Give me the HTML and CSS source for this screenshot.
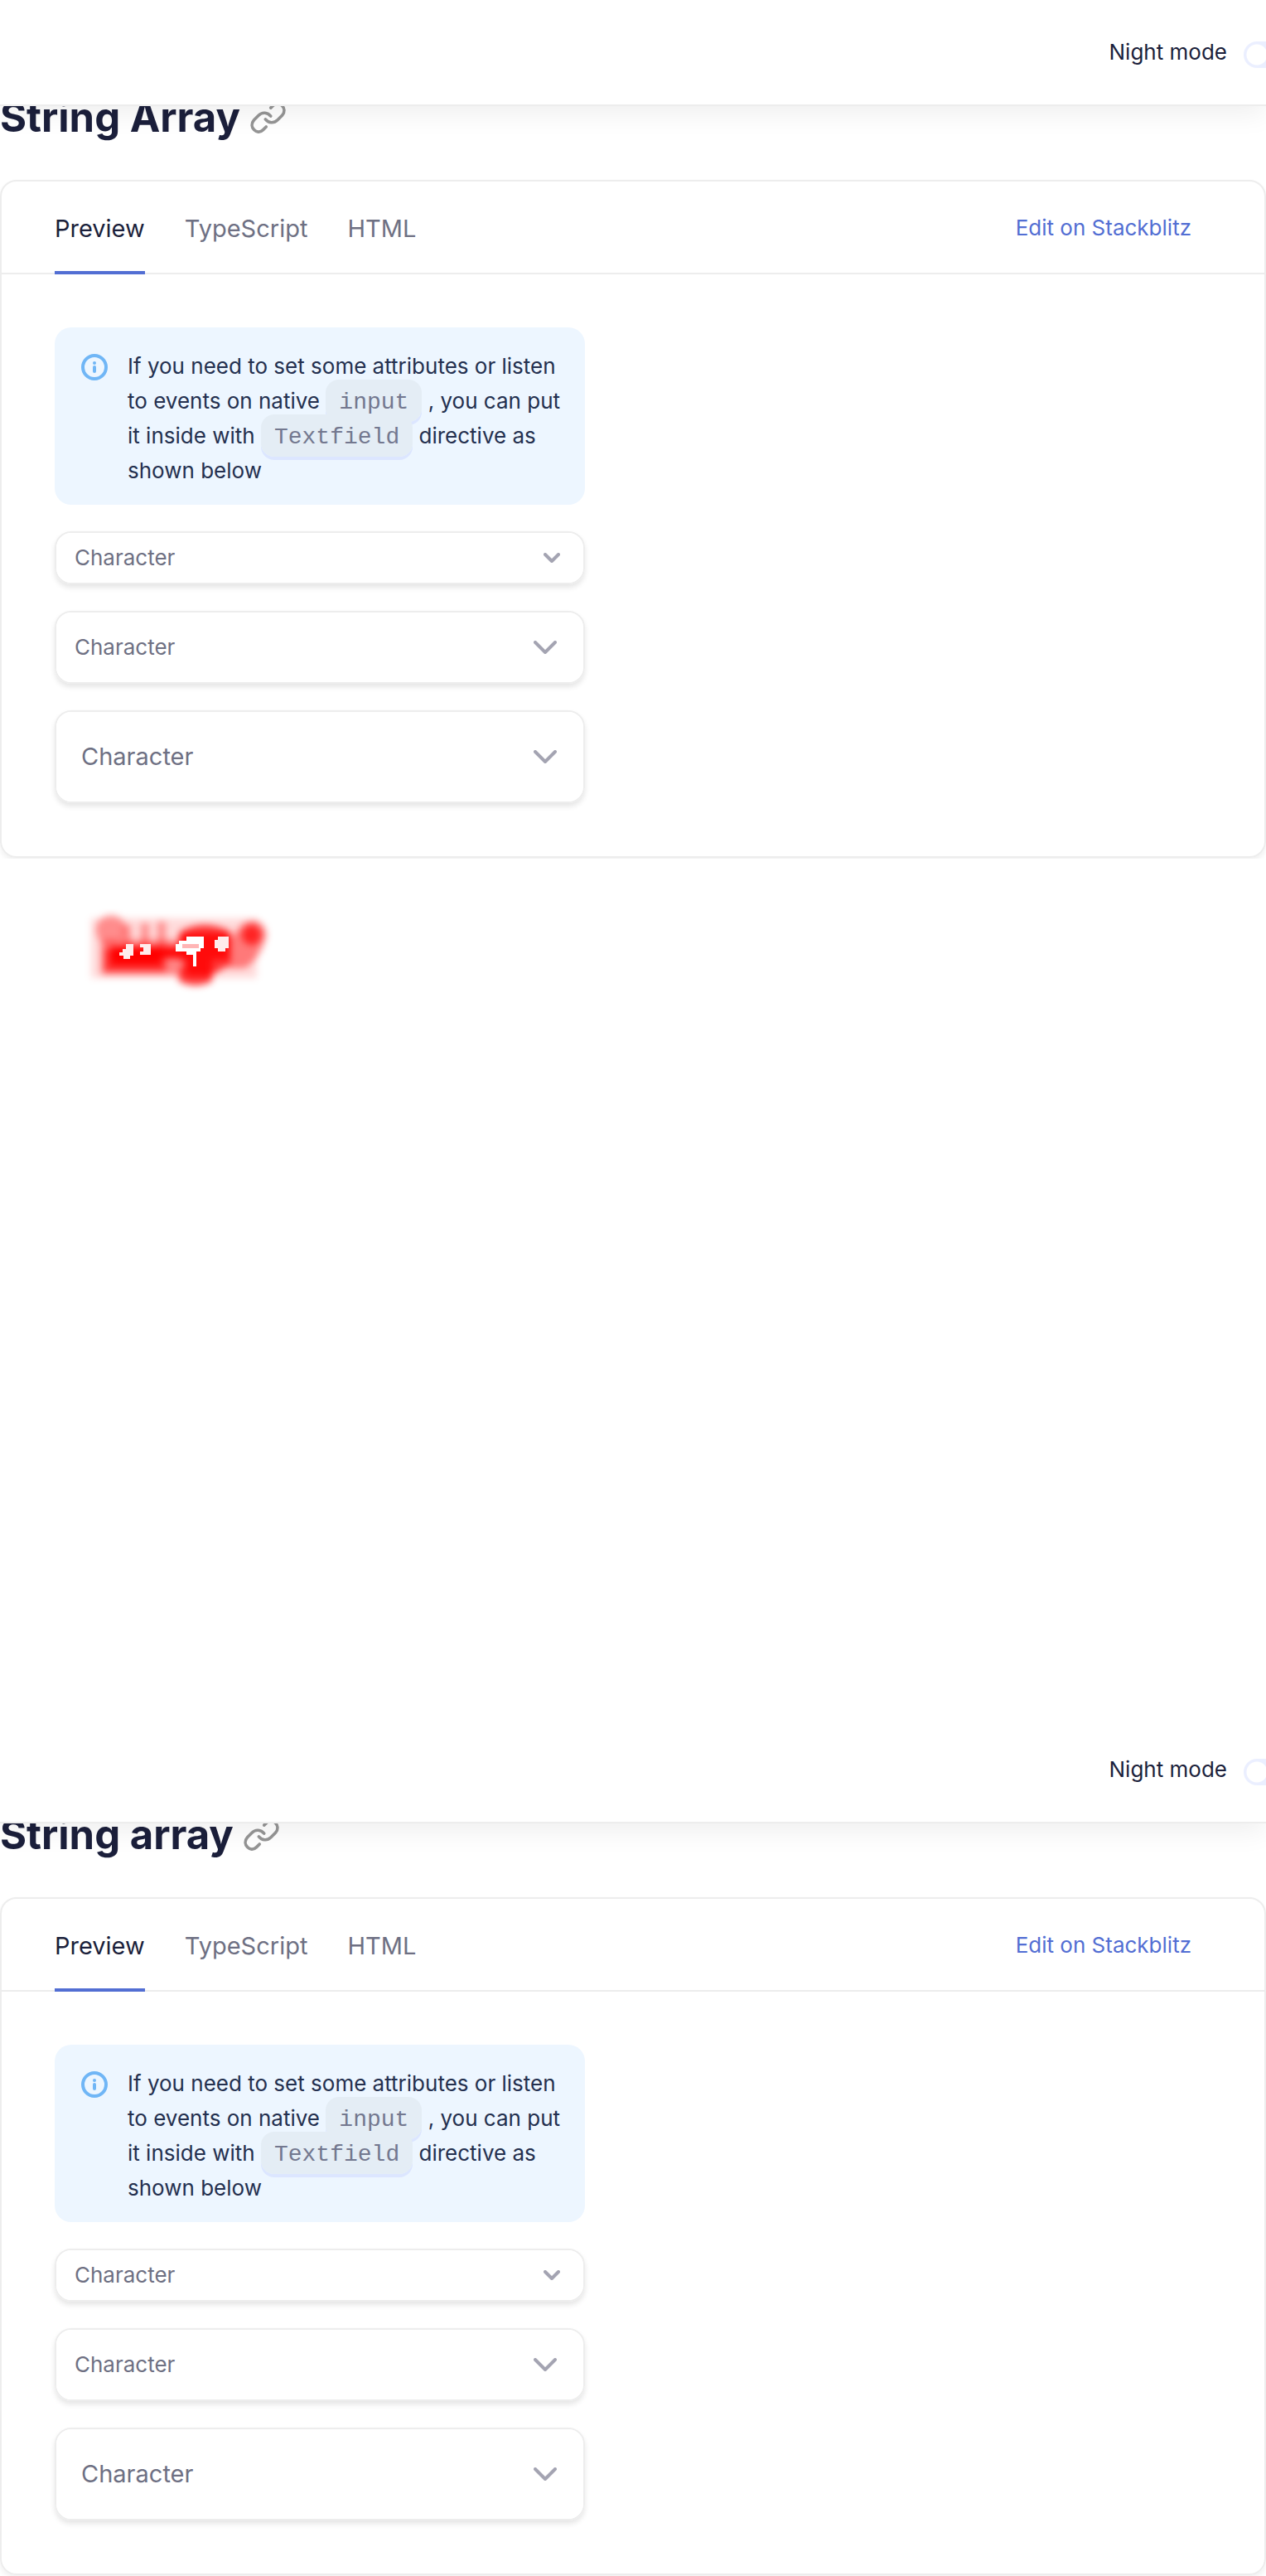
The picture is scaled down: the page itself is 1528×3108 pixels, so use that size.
FILE: index.html
```html
<!DOCTYPE html>
<html lang="en">
<head>
<meta charset="utf-8">
<meta name="viewport" content="width=device-width, initial-scale=1">
<title>String Array</title>
<link rel="stylesheet" href="styles.css">
</head>
<body>
<svg class="sprite" aria-hidden="true">
  <symbol id="link" viewBox="0 0 48 48">
    <g fill="none" stroke="currentColor" stroke-width="4" stroke-linecap="round" stroke-linejoin="round">
      <path d="M20 26c4 5 11 6 16 1l6-6c8-9-4-21-12-13l-3 3"/>
      <path d="M27 22c-4-5-11-6-16-1l-6 6c-8 9 4 21 12 13l4-4"/>
    </g>
  </symbol>
  <symbol id="info" viewBox="0 0 32 32">
    <circle cx="16" cy="16" r="14" fill="none" stroke="currentColor" stroke-width="4"/>
    <circle cx="16" cy="11" r="2" fill="currentColor"/>
    <path d="M16 16v5" stroke="currentColor" stroke-width="4" stroke-linecap="round"/>
  </symbol>
  <symbol id="chevron" viewBox="0 0 28 16">
    <path d="M2 2l12 12L26 2" fill="none" stroke="currentColor" stroke-width="4" stroke-linecap="round" stroke-linejoin="round"/>
  </symbol>
  <symbol id="chevron-small" viewBox="0 0 20 12">
    <path d="M2 2l8 8 8-8" fill="none" stroke="currentColor" stroke-width="4" stroke-linecap="round" stroke-linejoin="round"/>
  </symbol>
</svg>

<section class="shot">
  <header class="topbar">
    <label for="night-1">Night mode</label>
    <input class="toggle" type="checkbox" id="night-1">
  </header>
  <h2 class="title">String Array <a href="#string-array" aria-label="Link"><svg class="title-icon"><use href="#link"/></svg></a></h2>
  <article class="card">
    <nav class="tabs">
      <button class="tab active" type="button">Preview</button>
      <button class="tab" type="button">TypeScript</button>
      <button class="tab" type="button">HTML</button>
      <a class="edit" href="#edit">Edit on Stackblitz</a>
    </nav>
    <div class="demo">
      <div class="note">
        <svg class="note-icon"><use href="#info"/></svg>
        <p>If you need to set some attributes or listen to events on native <code>input</code> , you can put it inside with <code>Textfield</code> directive as shown below</p>
      </div>
      <div class="field small">
        <select aria-label="Character"><option>Character</option></select>
        <svg class="chevron"><use href="#chevron-small"/></svg>
      </div>
      <div class="field medium">
        <select aria-label="Character"><option>Character</option></select>
        <svg class="chevron"><use href="#chevron"/></svg>
      </div>
      <div class="field large">
        <select aria-label="Character"><option>Character</option></select>
        <svg class="chevron"><use href="#chevron"/></svg>
      </div>
    </div>
  </article>
</section>

<section class="diff">
  <svg class="heat" viewBox="0 0 240 104" aria-hidden="true">
    <defs><filter id="soft" x="-10%" y="-20%" width="120%" height="140%"><feGaussianBlur stdDeviation="4"/></filter></defs>
    <g filter="url(#soft)" fill="#f00">
      <path d="M14 12H214V84H14z" opacity=".14"/>
      <circle cx="38" cy="26" r="18" opacity=".36"/>
      <path d="M26 38H132V80H26z" opacity=".4"/>
      <path d="M30 48H104V76H30z" opacity=".62"/>
      <path d="M52 20h10v26H52zM74 18h10v30H74zM94 16h10v30H94z" opacity=".35"/>
      <path d="M122 28Q150 12 182 28V68L160 80V88Q140 98 120 88V78L126 68V60H98V46H122z" opacity=".75"/>
      <path d="M38 46h60v22H38z"/>
      <path d="M94 48h30v12H94zM120 30h62v32h-22v20h-30V62h-10z" opacity=".8"/>
      <path d="M180 38L198 18Q222 8 226 32Q220 58 200 72L180 72z" opacity=".45"/>
      <circle cx="208" cy="32" r="12" opacity=".7"/>
    </g>
    <g fill="#ffecec">
      <path d="M56 43h9v14h-4v4h-8v-4h-5v-4h4v-4h4zM73 43h13v13H73v-4h4v-5h-4z"/>
      <path fill="#fff" d="M129 34h21v14h-4v4h-5v18h-4V56h-8v-4h-13V43h4v-4h9z"/>
      <path fill="#ffb5b5" d="M124 43h20v5h-20z"/>
      <path d="M167 34h13v14h-4v4h-9v-4h-4V38h4z"/>
    </g>
  </svg>
</section>

<section class="shot">
  <header class="topbar">
    <label for="night-2">Night mode</label>
    <input class="toggle" type="checkbox" id="night-2">
  </header>
  <h2 class="title">String array <a href="#string-array" aria-label="Link"><svg class="title-icon"><use href="#link"/></svg></a></h2>
  <article class="card">
    <nav class="tabs">
      <button class="tab active" type="button">Preview</button>
      <button class="tab" type="button">TypeScript</button>
      <button class="tab" type="button">HTML</button>
      <a class="edit" href="#edit">Edit on Stackblitz</a>
    </nav>
    <div class="demo">
      <div class="note">
        <svg class="note-icon"><use href="#info"/></svg>
        <p>If you need to set some attributes or listen to events on native <code>input</code> , you can put it inside with <code>Textfield</code> directive as shown below</p>
      </div>
      <div class="field small">
        <select aria-label="Character"><option>Character</option></select>
        <svg class="chevron"><use href="#chevron-small"/></svg>
      </div>
      <div class="field medium">
        <select aria-label="Character"><option>Character</option></select>
        <svg class="chevron"><use href="#chevron"/></svg>
      </div>
      <div class="field large">
        <select aria-label="Character"><option>Character</option></select>
        <svg class="chevron"><use href="#chevron"/></svg>
      </div>
    </div>
  </article>
</section>
</body>
</html>
```
FILE: styles.css
```css
* { box-sizing: border-box; }
body {
  margin: 0;
  overflow-x: hidden;
  background: #fff;
  color: #1b1f3b;
  font: 26px/42px Inter, "Liberation Sans", sans-serif;
}
.sprite { display: none; }
.shot { padding-bottom: 1px; overflow: hidden; }

.topbar {
  position: relative;
  z-index: 1;
  display: flex;
  align-items: center;
  justify-content: flex-end;
  gap: 20px;
  height: 128px;
  background: #fff;
  border-bottom: 2px solid #ededed;
  box-shadow: 0 8px 32px rgba(0, 0, 0, .07);
}
.toggle {
  appearance: none;
  flex: none;
  width: 64px;
  height: 32px;
  margin: 6px -37px 0 0;
  border-radius: 16px;
  background: radial-gradient(circle at 16px 16px, #fff 12px, #ebefff 13px);
}

.title {
  display: flex;
  align-items: center;
  gap: 12px;
  margin: -18px 0 43px;
  font-size: 49px;
  line-height: 64px;
  font-weight: 700;
}
.title a { display: flex; color: #959595; }
.title-icon { width: 44px; height: 44px; }

.card {
  border: 2px solid #ededed;
  border-radius: 20px;
  box-shadow: 0 4px 6px rgba(0, 0, 0, .06);
}
.tabs {
  display: flex;
  align-items: stretch;
  gap: 48px;
  height: 112px;
  padding: 0 88px 0 64px;
  box-shadow: inset 0 -2px #ededed;
}
.tab {
  padding: 6px 0 0;
  border: 0;
  border-bottom: 4px solid transparent;
  background: none;
  color: #6e7083;
  font: inherit;
  font-size: 29px;
}
.tab.active { color: #1b1f3b; border-color: #526ed3; }
.edit {
  align-self: center;
  margin-left: auto;
  color: #526ed3;
  text-decoration: none;
}

.demo {
  display: flex;
  flex-direction: column;
  gap: 32px;
  max-width: 768px;
  padding: 64px;
}
.note {
  display: flex;
  gap: 24px;
  padding: 26px 24px 20px 32px;
  border-radius: 20px;
  background: #edf6ff;
  color: #24304f;
}
.note-icon { flex: none; width: 32px; height: 32px; margin-top: 6px; color: #70b6f6; }
.note p { margin: 0; }
.note code {
  padding: 12px 16px 8px;
  border-radius: 16px;
  background: #e4edf5;
  box-shadow: 0 4px #dce6ff;
  color: #73788f;
  font: 28px/28px "Liberation Mono", monospace;
}

.field {
  display: grid;
  align-items: center;
  border: 2px solid #ededed;
  border-radius: 20px;
  box-shadow: 0 4px 6px rgba(0, 0, 0, .1);
  color: #6e7083;
}
.field > * { grid-area: 1 / 1; }
.field select {
  appearance: none;
  width: 100%;
  height: 100%;
  padding: 0 22px;
  border: 0;
  border-radius: 18px;
  background: #fff;
  color: inherit;
  font: inherit;
}
.small { height: 64px; }
.medium { height: 88px; }
.large { height: 112px; font-size: 29px; }
.large select { padding: 0 30px; }
.chevron {
  justify-self: end;
  width: 28px;
  height: 16px;
  margin-right: 32px;
  color: #a4a4b2;
  pointer-events: none;
}
.small .chevron { width: 20px; height: 12px; margin-right: 28px; }

.diff { min-height: 1036px; padding: 60px 96px; }
.heat { display: block; width: 240px; height: 104px; }
```
